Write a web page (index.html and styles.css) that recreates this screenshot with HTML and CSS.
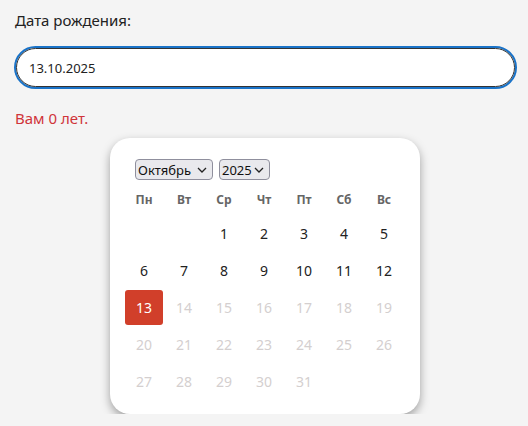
FILE: index.html
```html
<!DOCTYPE html>
<html lang="ru">
<head>
<meta charset="utf-8">
<link rel="stylesheet" href="styles.css">
</head>
<body>
<div class="page">
  <label class="label" for="dob">Дата рождения:</label>
  <div class="field"><input id="dob" class="input" type="text" value="13.10.2025"></div>
  <p class="age">Вам 0 лет.</p>
  <div class="picker">
    <div class="controls">
      <div class="sel sel-month">Октябрь<span class="chev"><svg width="10" height="6" viewBox="0 0 10 6"><path d="M1 1l4 4 4-4" fill="none" stroke="#222" stroke-width="1.3"/></svg></span></div>
      <div class="sel sel-year">2025<span class="chev"><svg width="10" height="6" viewBox="0 0 10 6"><path d="M1 1l4 4 4-4" fill="none" stroke="#222" stroke-width="1.3"/></svg></span></div>
    </div>
    <div class="grid">
      <div class="wd">Пн</div><div class="wd">Вт</div><div class="wd">Ср</div><div class="wd">Чт</div><div class="wd">Пт</div><div class="wd">Сб</div><div class="wd">Вс</div>
      <div class="d"></div><div class="d"></div><div class="d">1</div><div class="d">2</div><div class="d">3</div><div class="d">4</div><div class="d">5</div>
      <div class="d">6</div><div class="d">7</div><div class="d">8</div><div class="d">9</div><div class="d">10</div><div class="d">11</div><div class="d">12</div>
      <div class="d sel-day">13</div><div class="d off">14</div><div class="d off">15</div><div class="d off">16</div><div class="d off">17</div><div class="d off">18</div><div class="d off">19</div>
      <div class="d off">20</div><div class="d off">21</div><div class="d off">22</div><div class="d off">23</div><div class="d off">24</div><div class="d off">25</div><div class="d off">26</div>
      <div class="d off">27</div><div class="d off">28</div><div class="d off">29</div><div class="d off">30</div><div class="d off">31</div>
    </div>
  </div>
</div>
</body>
</html>
```
FILE: styles.css
```css
html, body {
  margin: 0;
  padding: 0;
  background: #f4f4f4;
  font-family: "Noto Sans", "Open Sans", sans-serif;
  color: #222;
}
.page {
  padding: 9px 11px 0 14px;
}
.label {
  display: block;
  margin-left: 1px;
  font-size: 15px;
  line-height: 22px;
}
.field {
  margin-top: 15px;
  border: 2px solid #1a73c8;
  border-radius: 22px;
  width: 499px;
  height: 39px;
  box-sizing: content-box;
}
.input {
  box-sizing: border-box;
  display: block;
  width: 100%;
  height: 100%;
  margin: 0;
  border: 1px solid #333;
  border-radius: 20px;
  padding: 0 12px;
  font: 13px "Noto Sans", sans-serif;
  color: #222;
  background: #fff;
  outline: none;
}
.age {
  margin: 18px 0 0 1px;
  font-size: 15px;
  line-height: 22px;
  color: #d0343a;
}
.picker {
  margin: 9px 0 0 96px;
  width: 310px;
  height: 276px;
  box-sizing: border-box;
  background: #fff;
  border-radius: 20px;
  box-shadow: 0 4px 10px rgba(0,0,0,0.35);
  padding: 21px 17px 0 15px;
}
.controls {
  display: flex;
  gap: 6px;
  padding-left: 10px;
}
.sel {
  display: flex;
  align-items: center;
  justify-content: space-between;
  box-sizing: border-box;
  height: 21px;
  padding: 0 5px 0 2px;
  border: 1px solid #8f8f9d;
  border-radius: 4px;
  background: #e9e9ed;
  font-size: 13px;
  color: #111;
}
.sel-month { width: 78px; }
.sel-year { width: 51px; }
.chev { display: flex; }
.grid {
  display: grid;
  grid-template-columns: repeat(7, 38px);
  grid-template-rows: 20px repeat(5, 35px);
  column-gap: 2px;
  row-gap: 2px;
  margin-top: 14px;
}
.wd {
  display: flex;
  align-items: center;
  justify-content: center;
  font-size: 12px;
  font-weight: 700;
  color: #666;
  margin-bottom: 9px;
}
.d {
  display: flex;
  align-items: center;
  justify-content: center;
  font-size: 14px;
  color: #222;
}
.off { color: #d4cfcf; }
.sel-day {
  background: #d13f2a;
  color: #fff;
  border-radius: 3px;
}
```
